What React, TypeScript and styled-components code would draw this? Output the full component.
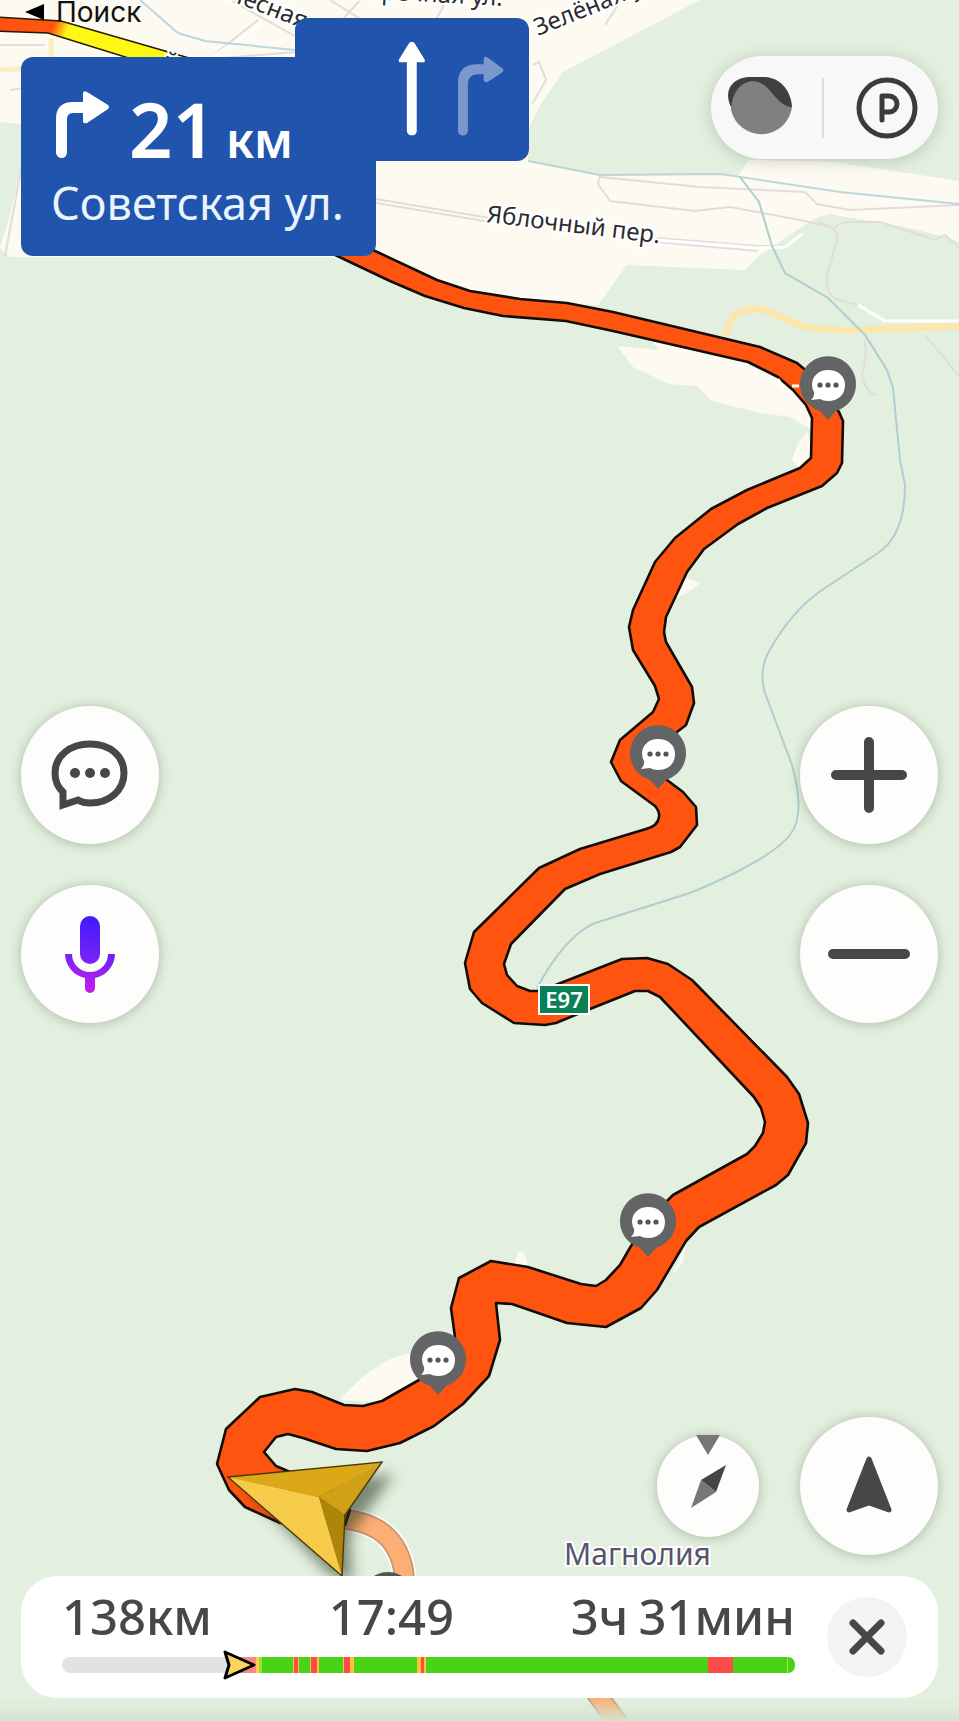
import React from "react";
import styled, { createGlobalStyle } from "styled-components";

const GlobalStyle = createGlobalStyle`
  *, *::before, *::after { box-sizing: border-box; }
  body { margin: 0; background: #e4f0df; font-family: "Noto Sans", "Open Sans", sans-serif; }
  button { font: inherit; border: 0; padding: 0; cursor: pointer; }
`;

const ink = "#474747";

/* ---------- layout ---------- */

const Screen = styled.main`
  position: relative;
  display: flex;
  flex-direction: column;
  min-height: 100vh;
  padding: 0 21px 23px;
  overflow: hidden;
`;

const MapCanvas = styled.svg`
  position: absolute;
  inset: 0;
  width: 100%;
  height: 100%;
`;

const Header = styled.header`
  position: relative;
  display: flex;
  align-items: flex-start;
  padding-bottom: 56px;
`;

const Guidance = styled.div`
  position: relative;
  z-index: 1;
  width: 355px;
`;

const BackLink = styled.a`
  display: flex;
  align-items: center;
  gap: 12px;
  height: 24px;
  padding-left: 4px;
  color: #111;
  font-family: Inter, sans-serif;
  font-size: 28px;
  line-height: 24px;
  text-decoration: none;
`;

const TurnSign = styled.section`
  height: 199px;
  margin-top: 33px;
  padding: 34px 16px 0 35px;
  border-radius: 12px;
  background: #2154ad;
  color: #fff;
`;

const TurnRow = styled.div`
  display: flex;
  align-items: flex-start;
  gap: 20px;
  height: 80px;
`;

const Distance = styled.strong`
  display: flex;
  align-items: baseline;
  gap: 10px;
  font-size: 76px;
  font-weight: 600;
  line-height: 76px;
`;

const DistanceUnit = styled.span`
  font-size: 48px;
`;

const Street = styled.p`
  margin: 0 0 0 -5px;
  color: #e9f4ff;
  font-size: 45px;
  line-height: 64px;
  white-space: nowrap;
`;

const LaneSign = styled.section`
  display: flex;
  gap: 32px;
  width: 234px;
  height: 143px;
  margin: 18px 0 0 -81px;
  padding: 23px 24px 0 103px;
  border-radius: 12px;
  background: #2154ad;
`;

const LayerPill = styled.div`
  display: flex;
  align-items: center;
  width: 227px;
  height: 103px;
  margin: 56px 0 0 auto;
  padding: 0 20px 0 16px;
  border-radius: 52px;
  background: #f8f8f8;
  box-shadow: 0 2px 16px rgba(40, 60, 40, 0.22);
`;

const PillButton = styled.button<{ $align: "start" | "end" }>`
  display: grid;
  flex: 1;
  height: 100%;
  align-items: center;
  justify-content: ${(p) => p.$align};
  background: transparent;
`;

const PillDivider = styled.span`
  width: 2px;
  height: 60px;
  background: #dcdcdc;
`;

const Controls = styled.div`
  position: relative;
  display: flex;
  justify-content: space-between;
  margin: auto 0;
`;

const ControlColumn = styled.div`
  display: flex;
  flex-direction: column;
  gap: 41px;
`;

const RoundButton = styled.button<{ $size?: number }>`
  display: grid;
  flex: none;
  place-items: center;
  width: ${(p) => p.$size ?? 138}px;
  height: ${(p) => p.$size ?? 138}px;
  border-radius: 50%;
  background: #fdfdfb;
  color: ${ink};
  box-shadow: 0 1px 12px rgba(40, 55, 40, 0.3);
`;

const LocationRow = styled.div`
  position: relative;
  display: flex;
  align-items: center;
  justify-content: flex-end;
  gap: 41px;
  margin-bottom: 21px;
`;

const TripPanel = styled.footer`
  position: relative;
  display: flex;
  align-items: center;
  gap: 32px;
  height: 122px;
  padding: 0 31px 0 41px;
  border-radius: 36px;
  background: #fff;
`;

const TripInfo = styled.div`
  flex: 1;
`;

const Stats = styled.div`
  display: flex;
  justify-content: space-between;
  color: ${ink};
  font-size: 49px;
  font-weight: 500;
  line-height: 60px;
  white-space: nowrap;
`;

const Stat = styled.span`
  display: flex;
  gap: 10px;
`;

const Track = styled.div`
  position: relative;
  display: flex;
  height: 16px;
  margin: 11px 0 15px;
`;

const Segment = styled.span<{ $color: string; $share: number }>`
  flex: ${(p) => p.$share} 1 0;
  background: ${(p) => p.$color};
  &:first-child { border-radius: 8px 0 0 8px; }
  &:last-of-type { border-radius: 0 8px 8px 0; }
`;

const TrackCursor = styled.svg`
  position: absolute;
  top: -7px;
  left: 22%;
  width: 34px;
  height: 30px;
`;

const CloseButton = styled.button`
  display: grid;
  flex: none;
  place-items: center;
  width: 80px;
  height: 80px;
  border-radius: 50%;
  background: #f3f3f3;
  color: ${ink};
`;

/* ---------- data ---------- */

const green = "#49d216";
const red = "#fb4e4a";
const amber = "#ffc03c";

const traffic: [string, number][] = [
  ["#e2e2e2", 175], ["#fb8a78", 19], ["#ffd23c", 3], ["#8fe04a", 3], [green, 31],
  [amber, 1], [red, 4], [amber, 1], [green, 11], [amber, 1], [red, 6], [amber, 2], [green, 24],
  [amber, 1], [red, 6], [amber, 4], [green, 63], [amber, 4], [red, 3], [amber, 2],
  [green, 281], [red, 25], [green, 54], ["#a5e636", 1], [green, 7],
];

const pins: [number, number][] = [[828, 385], [658, 754], [648, 1222], [438, 1360]];

const routeShape =
  "M331 253 L390 281 L425 296 L464 308 L503 316 L566 321 L613 331 L748 362 L778 377 L793 390 L806 405 L812 418 L811 458 L800 468 L747 490 L711 509 L675 538 L655 562 L633 610 L629 627 L633 650 L655 686 L659 699 L653 712 L620 740 L611 762 L621 781 L655 806 Q660 812 659 817 Q658 826 646 829 L580 849 L539 868 L474 932 L465 963 L470 989 L482 1003 L514 1023 L545 1025 L556 1023 L585 1011 L635 991 L648 991 L660 997 L754 1097 L761 1108 L765 1122 L763 1133 L755 1146 L747 1154 L673 1195 L650 1218 L631 1246 L620 1265 L606 1280 L596 1286 L581 1284 L528 1267 L491 1261 L459 1278 L451 1308 L455 1337 L440 1367 L419 1380 L382 1401 L363 1406 L344 1405 L312 1392 L295 1389 L260 1397 L226 1429 L217 1464 L229 1490 L245 1507 L280 1523 L345 1525 L350 1510 L325 1480 L290 1472 L276 1466 L264 1452 L276 1437 L288 1434 L303 1438 L336 1449 L367 1451 L400 1443 L434 1426 L463 1404 L489 1376 L500 1340 L496 1303 L512 1304 L567 1323 L606 1327 L641 1308 L657 1290 L686 1241 L699 1227 L776 1185 L788 1175 L806 1143 L808 1123 L799 1094 L787 1077 L692 980 L668 964 L647 958 L622 959 L558 984 L540 991 L530 991 L517 986 L507 975 L504 964 L511 944 L565 889 L600 874 L671 852 L680 847 L697 825 L696 807 L683 792 L667 780 L640 755 L677 732 L686 725 L694 703 L692 687 L666 642 L664 632 L666 617 L687 572 L704 549 L738 524 L767 508 L822 486 L837 473 L842 463 L843 421 L839 412 L815 378 L797 363 L760 347 L613 312 L567 303 L520 299 L470 291 L437 280 L373 250 Z";

/* ---------- drawings ---------- */

function TurnArrow({ color, width, height }: { color: string; width: number; height: number }) {
  return (
    <svg width={width} height={height} viewBox="0 0 53 68" preserveAspectRatio="none" aria-hidden="true">
      <path
        d="M0 62V28Q0 11 17 11H27V2Q28 -1 31 1L52 14Q54 16 52 18L31 32Q28 33 27 31V22H17Q11 22 11 28V62Q10 67 6 67Q1 67 0 62Z"
        fill={color}
      />
    </svg>
  );
}

function MapPin({ x, y }: { x: number; y: number }) {
  return (
    <g transform={`translate(${x} ${y})`}>
      <path d="M0 35L-8 26A28 28 0 1 1 8 26Z" fill="#636466" />
      <path
        d="M0 -15C10 -15 17 -9 17 0C17 10 10 16 0 16C-3 16 -6 15 -8 14L-17 15Q-13 11 -14 7A16 16 0 0 1 -16 0C-16 -9 -9 -15 0 -15Z"
        fill="#fff"
      />
      <circle cx="-8" r="2.6" fill="#555" />
      <circle r="2.6" fill="#555" />
      <circle cx="8" r="2.6" fill="#555" />
    </g>
  );
}

function RouteMap() {
  return (
    <MapCanvas viewBox="0 0 959 1721" preserveAspectRatio="xMidYMid slice" role="img" aria-label="Карта маршрута">
      <defs>
        <linearGradient id="jam" x1="64" x2="78" y1="0" y2="6" gradientUnits="userSpaceOnUse">
          <stop offset="0" stopColor="#ff5410" />
          <stop offset="1" stopColor="#fff814" />
        </linearGradient>
        <linearGradient id="fade" x1="0" x2="0" y1="0" y2="1">
          <stop offset="0" stopColor="#d8e6d3" stopOpacity="0" />
          <stop offset="1" stopColor="#d4e2cf" />
        </linearGradient>
        <filter id="soft" x="-50%" y="-50%" width="200%" height="200%">
          <feGaussianBlur stdDeviation="7" />
        </filter>
      </defs>
      <rect width="959" height="1721" fill="#e4f0df" />

      <g fill="#fdfaf2">
        <path d="M0 0H700L563 72L540 105L528 130V161L600 176L720 174L738 176L749 160L835 162L959 181V242L946 237L905 227L830 214L815 218L760 255L745 270L627 265L598 305L466 300L331 257H10L0 248L10 215L22 165V124L0 122Z" />
        <path d="M617 346L634 368L670 384L697 386L712 401L760 413L790 417L812 430V410L793 388L748 362L650 340L660 350Z" />
        <path d="M808 432L798 443L792 460L800 470L812 458Z" />
        <path d="M684 577L700 583L692 590L676 598Z" />
        <path d="M514 1264L518 1253Q521 1250 524 1253L529 1267Z" />
        <path d="M686 1243L683 1262L672 1275Z" />
        <path d="M340 1400Q370 1366 398 1356L415 1352L430 1376L382 1402Z" />
      </g>

      <g fill="none" stroke="#e2ddd8" strokeWidth="2">
        <path d="M230 0L320 50L200 60M330 0L370 25M205 62L258 20M360 0L320 45M430 30L447 0M0 45H45M0 70H60M10 90L55 84" />
        <path d="M376 199L490 218M376 203L490 222M657 238L758 246L785 246L802 233M657 242L758 251M600 176L598 184L610 201L695 211L730 207L800 220L835 228" />
        <path d="M600 177L700 187L805 192L817 204L850 210L959 205M835 228Q840 222 850 222L880 222L935 240L945 235L959 248M818 222Q840 228 837 240L827 275Q825 295 838 300L858 305" />
        <path d="M864 340Q868 350 862 375Q864 390 876 396M925 335L959 376M533 65L539 62L546 80L532 104M620 2L605 25" />
        <path d="M22 165L5 256" />
      </g>
      <path d="M858 305L885 321H959M657 240L758 248L785 247L802 234M205 62L262 24" fill="none" stroke="#fff" strokeWidth="3" />
      <path d="M0 70L51 67V38" fill="none" stroke="#faedc0" strokeWidth="5" />
      <path d="M725 335L733 317Q745 306 765 310L800 325Q820 331 860 330L959 326" fill="none" stroke="#fbe6ab" strokeWidth="7" />

      <g fill="none" stroke="#afcdd3" strokeWidth="2">
        <path d="M140 0L178 33L205 41L295 50M528 161L600 175L720 174L840 192L959 204" opacity="0.8" />
        <path d="M740 177L759 202L772 246L785 273L828 298L865 335L887 370L893 388L900 460L905 485Q905 535 878 553L822 590Q790 612 767 655Q759 674 765 693L792 765Q806 815 790 835Q770 860 690 893L595 923Q565 936 537 988" />
      </g>

      <path d="M340 1519Q403 1523 405 1585" fill="none" stroke="#fff" strokeWidth="24" />
      <path d="M340 1519Q403 1523 405 1585M590 1685L625 1732" fill="none" stroke="#c99a74" strokeWidth="21" />
      <path d="M340 1519Q403 1523 405 1585M590 1685L625 1732" fill="none" stroke="#fdae74" strokeWidth="17" />
      <circle cx="388" cy="1600" r="28" fill="#555" />

      <path d="M-5 17L61 21L165 51L210 64L180 74L48 33L-5 31Z" fill="url(#jam)" stroke="#241a05" strokeWidth="1.5" />
      <path d={routeShape} fill="#ff5410" stroke="#120d08" strokeWidth="2.6" strokeLinejoin="round" />
      <path d="M778 379L783 388M792 386L799 386" stroke="#fff" strokeWidth="3" />

      {pins.map(([x, y]) => (
        <MapPin key={`${x}-${y}`} x={x} y={y} />
      ))}

      <g>
        <path d="M248 1490L394 1474L350 1535L352 1582L330 1575Z" fill="#24301f" opacity="0.55" filter="url(#soft)" />
        <path d="M228 1477L382 1462L319 1497Z" fill="#dba817" />
        <path d="M228 1477L319 1497L342 1576Z" fill="#f5cb49" />
        <path d="M382 1462L345 1515L319 1497Z" fill="#d2a015" />
        <path d="M319 1497L345 1515L342 1576Z" fill="#ae850b" />
        <path d="M228 1477L382 1462L345 1515L342 1576Z" fill="none" stroke="#4a3a0c" strokeWidth="1.4" />
      </g>

      <rect x="539" y="985" width="50" height="29" fill="#0a8057" stroke="#fff" strokeWidth="2" />
      <text x="564" y="1008" fill="#fff" fontSize="22" fontWeight="600" textAnchor="middle">E97</text>

      <g fill="#2c2c30" stroke="#fff" strokeWidth="4" paintOrder="stroke" fontSize="24">
        <text transform="translate(486 222) rotate(7)">Яблочный пер.</text>
        <text transform="translate(538 36) rotate(-22)">Зелёная ул.</text>
        <text transform="translate(226 -1) rotate(21)">Лесная</text>
        <text transform="translate(354 -2) rotate(3)">Заречная ул.</text>
        <text transform="translate(162 68) rotate(12)">й</text>
        <text x="564" y="1565" fill="#56546f" fontSize="30">Магнолия</text>
      </g>
      <rect y="1698" width="959" height="23" fill="url(#fade)" />
    </MapCanvas>
  );
}

/* ---------- page ---------- */

export default function App() {
  return (
    <Screen>
      <GlobalStyle />
      <RouteMap />

      <Header>
        <Guidance>
          <BackLink href="#search">
            <svg width="19" height="16" viewBox="0 0 19 16" aria-hidden="true">
              <path d="M0 8L19 0V16Z" fill="#000" />
            </svg>
            Поиск
          </BackLink>
          <TurnSign>
            <TurnRow>
              <TurnArrow color="#fff" width={53} height={68} />
              <Distance>
                21 <DistanceUnit>км</DistanceUnit>
              </Distance>
            </TurnRow>
            <Street>Советская ул.</Street>
          </TurnSign>
        </Guidance>

        <LaneSign aria-label="Полосы движения">
          <svg width="28" height="96" viewBox="0 0 28 96" aria-hidden="true">
            <path d="M14 0Q16 0 17 2L27 18Q28 21 25 21H19V91Q18 95 14 95Q10 95 9 91V21H3Q0 21 1 18L11 2Q12 0 14 0Z" fill="#fff" />
          </svg>
          <svg width="48" height="96" viewBox="0 0 48 96" aria-hidden="true">
            <path d="M0 91V42Q0 24 18 23H26V17Q27 14 30 16L45 27Q47 29 45 31L30 41Q27 42 26 39V33H19Q10 34 10 43V91Q9 95 5 95Q1 95 0 91Z" fill="#7b98cd" />
          </svg>
        </LaneSign>

        <LayerPill>
          <PillButton $align="start" aria-label="Пробки">
            <svg width="66" height="62" viewBox="0 0 66 62" aria-hidden="true">
              <path d="M5 32C-5 14 5 0 24 0H38C54 1 64 14 65 30L50 34Z" fill="#3f3f3f" />
              <path d="M4 33C5 17 12 5 26 4C44 5 48 29 65 30A31 31 0 0 1 4 33Z" fill="#808080" />
            </svg>
          </PillButton>
          <PillDivider />
          <PillButton $align="end" aria-label="Парковки">
            <svg width="62" height="62" viewBox="0 0 62 62" fill="none" stroke="#3b3b3b" aria-hidden="true">
              <circle cx="31" cy="31" r="28" strokeWidth="5" />
              <path d="M26 43V19H33A8 8 0 0 1 33 35H26" strokeWidth="5" strokeLinecap="round" strokeLinejoin="round" />
            </svg>
          </PillButton>
        </LayerPill>
      </Header>

      <Controls>
        <ControlColumn>
          <RoundButton aria-label="Сообщения">
            <svg width="78" height="74" viewBox="0 0 78 74" aria-hidden="true">
              <path
                d="M39 6C59 6 73 18 73 35C73 52 59 65 39 65Q32 65 27 62L12 67V54Q4 47 4 35C4 18 19 6 39 6Z"
                fill="none"
                stroke="currentColor"
                strokeWidth="7"
              />
              <circle cx="24" cy="35" r="5" fill="currentColor" />
              <circle cx="39" cy="35" r="5" fill="currentColor" />
              <circle cx="54" cy="35" r="5" fill="currentColor" />
            </svg>
          </RoundButton>
          <RoundButton aria-label="Голосовой помощник">
            <svg width="52" height="78" viewBox="0 0 52 78" aria-hidden="true">
              <defs>
                <linearGradient id="voice" x1="36" x2="16" y1="0" y2="80" gradientUnits="userSpaceOnUse">
                  <stop offset="0" stopColor="#3b1bff" />
                  <stop offset="0.55" stopColor="#7722f5" />
                  <stop offset="0.85" stopColor="#b91df0" />
                  <stop offset="1" stopColor="#c41bf0" />
                </linearGradient>
              </defs>
              <g fill="url(#voice)">
                <rect x="16" y="1" width="20" height="48" rx="10" />
                <path d="M1 39H8A18 18 0 0 0 44 39H51A25 25 0 0 1 31 63V73A5 5 0 0 1 21 73V63A25 25 0 0 1 1 39Z" />
              </g>
            </svg>
          </RoundButton>
        </ControlColumn>
        <ControlColumn>
          <RoundButton aria-label="Приблизить">
            <svg width="82" height="82" viewBox="0 0 82 82" stroke="currentColor" strokeWidth="10" strokeLinecap="round" aria-hidden="true">
              <path d="M41 8V74M8 41H74" />
            </svg>
          </RoundButton>
          <RoundButton aria-label="Отдалить">
            <svg width="82" height="82" viewBox="0 0 82 82" stroke="currentColor" strokeWidth="10" strokeLinecap="round" aria-hidden="true">
              <path d="M5 41H77" />
            </svg>
          </RoundButton>
        </ControlColumn>
      </Controls>

      <LocationRow>
        <RoundButton $size={102} aria-label="Компас">
          <svg width="102" height="102" viewBox="0 0 102 102" aria-hidden="true">
            <path d="M39 0H63L51 20Z" fill="#777" />
            <path d="M69 30L44 45L59 57Z" fill="#444" />
            <path d="M34 73L44 45L59 57Z" fill="#777" />
          </svg>
        </RoundButton>
        <RoundButton aria-label="Моё местоположение">
          <svg width="48" height="60" viewBox="0 0 48 60" aria-hidden="true">
            <path d="M24 3L44 54L24 47L4 54Z" fill="currentColor" stroke="currentColor" strokeWidth="5" strokeLinejoin="round" />
          </svg>
        </RoundButton>
      </LocationRow>

      <TripPanel>
        <TripInfo>
          <Stats>
            <Stat>138км</Stat>
            <Stat>17:49</Stat>
            <Stat>
              <span>3ч</span>
              <span>31мин</span>
            </Stat>
          </Stats>
          <Track role="img" aria-label="Пробки на маршруте">
            {traffic.map(([color, share], i) => (
              <Segment key={i} $color={color} $share={share} />
            ))}
            <TrackCursor viewBox="0 0 34 30" aria-hidden="true">
              <path d="M2 2L31 15L2 28L6 15Z" fill="#fcd45c" stroke="#000" strokeWidth="3" strokeLinejoin="round" />
            </TrackCursor>
          </Track>
        </TripInfo>
        <CloseButton aria-label="Закрыть">
          <svg width="38" height="38" viewBox="0 0 38 38" stroke="currentColor" strokeWidth="7" strokeLinecap="round" aria-hidden="true">
            <path d="M5 5L33 33M33 5L5 33" />
          </svg>
        </CloseButton>
      </TripPanel>
    </Screen>
  );
}
